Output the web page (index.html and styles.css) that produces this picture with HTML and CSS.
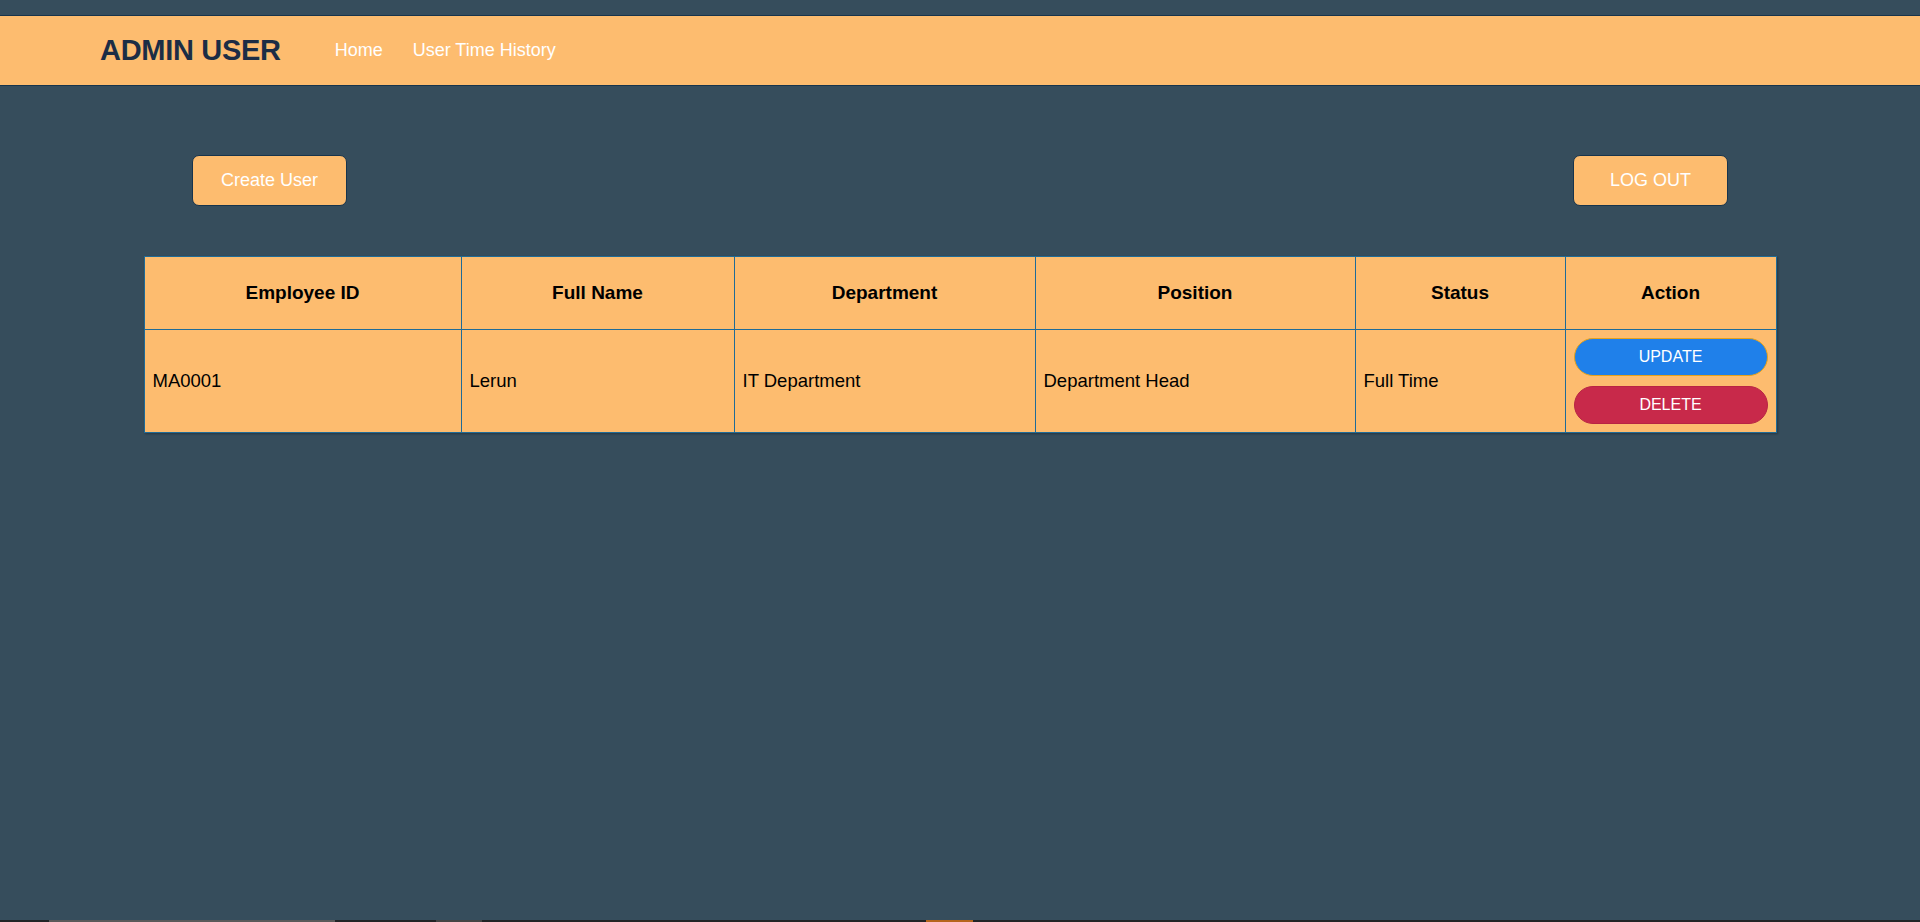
FILE: index.html
```html
<!DOCTYPE html>
<html lang="en">
<head>
<meta charset="utf-8">
<title>Admin User</title>
<link rel="stylesheet" href="styles.css">
</head>
<body>
<div class="page">
  <nav class="navbar">
    <span class="brand">ADMIN USER</span>
    <a class="nav-link" href="#">Home</a>
    <a class="nav-link" href="#">User Time History</a>
  </nav>

  <main class="content">
    <div class="toolbar">
      <button class="btn-main">Create User</button>
      <button class="btn-main">LOG OUT</button>
    </div>

    <table class="users">
      <colgroup>
        <col class="c-id">
        <col class="c-name">
        <col class="c-dept">
        <col class="c-pos">
        <col class="c-status">
        <col class="c-action">
      </colgroup>
      <thead>
        <tr>
          <th>Employee ID</th>
          <th>Full Name</th>
          <th>Department</th>
          <th>Position</th>
          <th>Status</th>
          <th>Action</th>
        </tr>
      </thead>
      <tbody>
        <tr>
          <td>MA0001</td>
          <td>Lerun</td>
          <td>IT Department</td>
          <td>Department Head</td>
          <td>Full Time</td>
          <td class="actions">
            <button class="pill pill-update">UPDATE</button>
            <button class="pill pill-delete">DELETE</button>
          </td>
        </tr>
      </tbody>
    </table>
  </main>

  <div class="taskstrip">
    <span class="seg seg-a"></span>
    <span class="seg seg-b"></span>
    <span class="seg seg-c"></span>
  </div>
</div>
</body>
</html>
```

FILE: styles.css
```css
* {
  box-sizing: border-box;
}

html, body {
  margin: 0;
  padding: 0;
  height: 100%;
}

body {
  background: #364d5c;
  font-family: "Liberation Sans", Arial, sans-serif;
  color: #000;
  overflow: hidden;
}

.page {
  min-height: 100vh;
  display: flex;
  flex-direction: column;
}

.navbar {
  margin-top: 15px;
  height: 71px;
  background: #fdbc6f;
  border-top: 1px solid #17344c;
  border-bottom: 1px solid #17344c;
  display: flex;
  align-items: center;
  padding-left: 100px;
}

.brand {
  font-size: 29px;
  font-weight: bold;
  color: #1c2d45;
  margin-right: 54px;
  letter-spacing: -0.3px;
}

.nav-link {
  color: #fff;
  text-decoration: none;
  font-size: 18px;
  margin-right: 30px;
}

.content {
  flex: 1;
}

.toolbar {
  width: 80%;
  margin: 69px auto 0;
  display: flex;
  justify-content: space-between;
}

.btn-main {
  width: 155px;
  height: 51px;
  background: #fdbc6f;
  border: 1px solid #17344c;
  border-radius: 7px;
  color: #fff;
  font-family: "Liberation Sans", Arial, sans-serif;
  font-size: 18px;
  padding: 0;
}

.users {
  width: 85%;
  margin: 50px auto 0;
  border-collapse: collapse;
  table-layout: fixed;
  background: #fdbc6f;
  box-shadow: 1px 1px 2px rgba(0, 0, 0, 0.3);
}

.c-id { width: 317px; }
.c-name { width: 273px; }
.c-dept { width: 301px; }
.c-pos { width: 320px; }
.c-status { width: 210px; }
.c-action { width: 211px; }

.users th,
.users td {
  border: 1px solid #1f6b97;
}

.users th {
  font-size: 19px;
  font-weight: bold;
  text-align: center;
  line-height: 22px;
  padding: 25px 8px;
}

.users td {
  font-size: 18.5px;
  text-align: left;
  padding: 8px;
  vertical-align: middle;
}

.pill {
  display: block;
  width: 100%;
  height: 38px;
  border-radius: 19px;
  color: #fff;
  font-family: "Liberation Sans", Arial, sans-serif;
  font-size: 16px;
  padding: 0;
}

.pill-update {
  background: #1f80ea;
  border: 1px solid #e6a21a;
  margin-bottom: 10px;
}

.pill-delete {
  background: #c8294a;
  border: 1px solid #b82444;
}

.taskstrip {
  height: 2px;
  background: #222426;
  display: flex;
}

.seg {
  height: 2px;
}

.seg-a {
  margin-left: 49px;
  width: 286px;
  background: #5a5a5a;
}

.seg-b {
  margin-left: 101px;
  width: 46px;
  background: #454545;
}

.seg-c {
  margin-left: 444px;
  width: 47px;
  background: #b5651d;
}
```
